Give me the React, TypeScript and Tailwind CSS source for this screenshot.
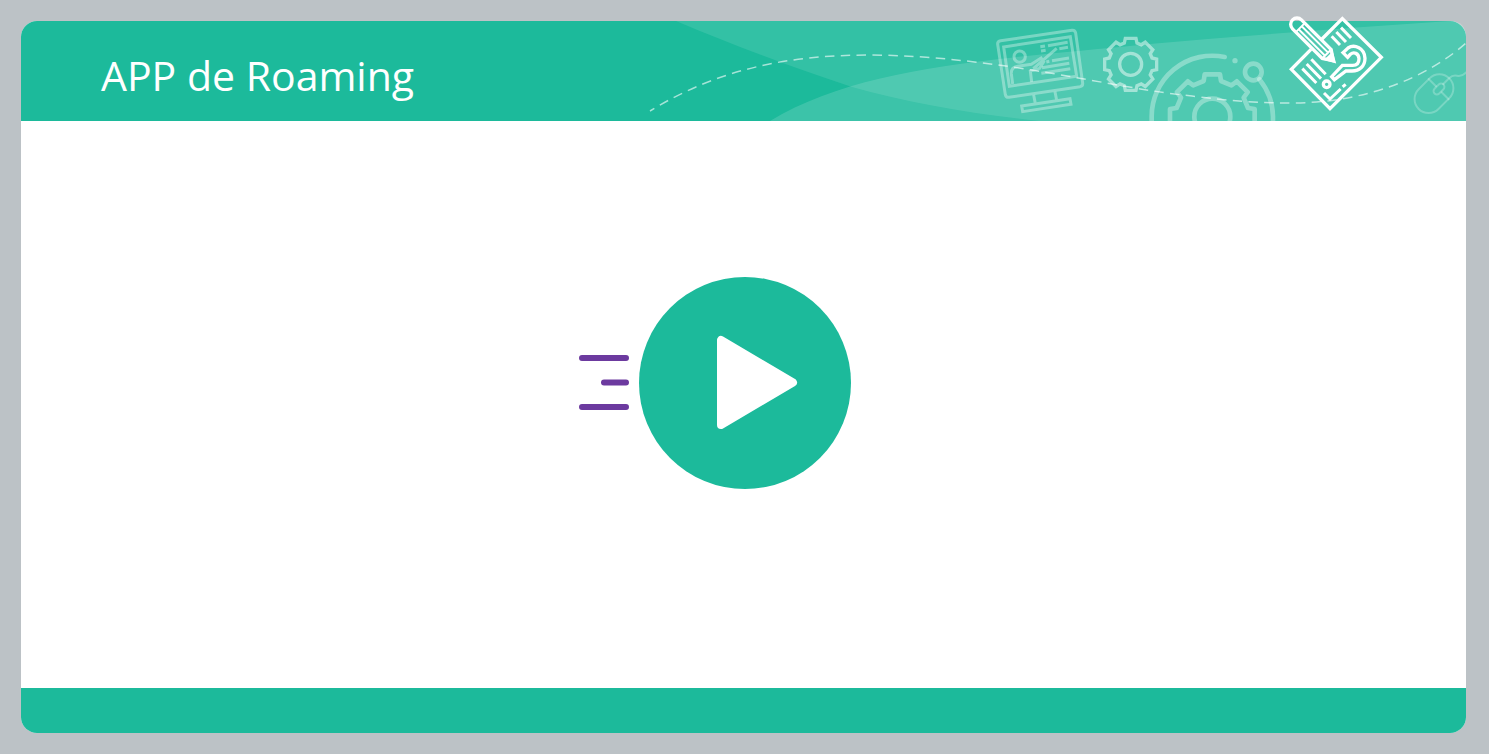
const TEETH = [0, 45, 90, 135, 180, 225, 270, 315];

function gearPath(cx: number, cy: number, outer: number, inner: number, half: number): string {
  const points = TEETH.flatMap((deg) => {
    const a = (deg * Math.PI) / 180;
    const corners = [
      [-half - 2, -inner],
      [-half + 1, -outer],
      [half - 1, -outer],
      [half + 2, -inner],
    ];
    return corners.map(([x, y]) => {
      const px = cx + x * Math.cos(a) - y * Math.sin(a);
      const py = cy + x * Math.sin(a) + y * Math.cos(a);
      return `${px.toFixed(1)} ${py.toFixed(1)}`;
    });
  });
  return `M${points.join("L")}Z`;
}

function Monitor() {
  return (
    <g transform="translate(980 15) scale(.3333)" stroke="#fff" strokeOpacity=".34" strokeWidth="9" fill="none">
      <path d="M62 77L276 46Q285 45 287 54L308 204Q309 213 300 215L87 247Q78 248 76 239L53 88Q52 79 62 77Z" />
      <path d="M71 96L271 65L290 184L88 214Z" />
      <circle cx="119" cy="125" r="17" />
      <path d="M98 207L94 176Q93 157 113 154L154 148L187 127M155 201L151 168L179 160L193 137M160 161L230 100" />
      <path d="M181 95L195 93M204 92L263 82M183 108L197 106M238 101L264 97M199 141L208 139M216 137L267 129M186 158L268 145M184 175L271 161" />
      <path d="M161 240L166 266M225 230L230 256M125 273L270 251L273 268L128 290Z" />
    </g>
  );
}

function Gears() {
  return (
    <>
      <g transform="translate(980 15) scale(.3333)" stroke="#fff" strokeOpacity=".48" strokeWidth="10" fill="none">
        <path d={gearPath(452, 148, 78, 64, 17)} />
        <circle cx="452" cy="148" r="33" />
      </g>
      <g transform="translate(1135 15) scale(.3333)" stroke="#fff" strokeOpacity=".33" strokeWidth="14" fill="none" strokeLinejoin="round" strokeLinecap="round">
        <path d={gearPath(232, 305, 127, 107, 24)} />
        <circle cx="232" cy="305" r="54" />
        <path d="M50 320V305A182 182 0 0 1 269 126M373 193A182 182 0 0 1 414 305V320" />
        <circle cx="355" cy="171" r="25" />
        <circle cx="300" cy="137" r="8" fill="#fff" fillOpacity=".33" stroke="none" />
      </g>
    </>
  );
}

function Mouse() {
  return (
    <g transform="translate(1380 10) scale(.3333)" stroke="#fff" strokeOpacity=".24" strokeWidth="6" fill="none" strokeLinecap="round">
      <rect x="-42" y="-65" width="84" height="130" rx="42" transform="translate(162 251) rotate(45)" />
      <rect x="-10" y="-19" width="20" height="38" rx="10" transform="translate(177 237) rotate(45)" />
      <path d="M146 207L168 229M185 247L206 268M190 222L208 204Q218 194 231 197Q247 201 262 184" />
    </g>
  );
}

function QuizSheet() {
  return (
    <g transform="translate(1275 5) scale(.3333)" stroke="#fff" strokeWidth="10" fill="none">
      <path d="M108 133L49 193L165 311L319 157L202 41L141 102" />
      <g transform="translate(66 58) rotate(45)">
        <path d="M0 -19A19 19 0 0 0 0 19L126 19L154 0L126 -19Z" />
        <path d="M14 -19V19M14 -6H126M14 7H126M126 -19V19" strokeWidth="6" />
        <path d="M138 -10L156 0L138 10Z" fill="#fff" />
      </g>
      <path d="M82 191L124 234M95 177L138 221M109 163L152 208M170 94L195 120M184 81L213 111M198 68L228 99" strokeWidth="9" />
      <path d="M204 143L219 129C239 116 269 130 270 160C270 183 254 198 231 198H213L178 224L170 215L202 181H233C246 181 252 173 252 161C251 145 237 139 226 148L218 157Z" />
      <circle cx="155" cy="238" r="10" />
      <path d="M147 264L165 282L197 252M203 246L212 238" strokeWidth="9" />
    </g>
  );
}

function HeaderArt() {
  return (
    <svg
      className="pointer-events-none absolute right-0 bottom-0 h-[120px] w-[826px]"
      viewBox="640 1 826 120"
      aria-hidden="true"
    >
      <defs>
        <clipPath id="band">
          <path d="M640 21H1450Q1466 21 1466 37V121H640Z" />
        </clipPath>
      </defs>
      <g clipPath="url(#band)">
        <path d="M676 21C735 46 795 68 852 87C910 103 972 114 1040 121H1466V21Z" fill="#fff" fillOpacity=".1" />
        <path d="M770 121C860 66 990 60 1150 44C1250 35 1350 28 1450 21H1466V121Z" fill="#fff" fillOpacity=".14" />
        <Monitor />
        <Gears />
        <Mouse />
        <path
          d="M650 111C720 68 790 55 870 55C1000 56 1110 88 1192 96C1230 101 1260 103 1290 103C1370 103 1430 75 1466 43"
          fill="none"
          stroke="#fff"
          strokeOpacity=".6"
          strokeWidth="1.5"
          strokeDasharray="9.5 6.3"
          strokeDashoffset="4.5"
        />
      </g>
      <QuizSheet />
    </svg>
  );
}

export default function App() {
  return (
    <div className="flex min-h-screen flex-col bg-[#bcc2c6] py-[21px] pr-[23px] pl-[21px]">
      <div className="flex flex-1 flex-col rounded-2xl bg-white">
        <header className="relative flex h-[100px] items-center rounded-t-2xl bg-[#1cba9b] px-20">
          <HeaderArt />
          <h1 className="relative pt-2 font-['Open_Sans',sans-serif] text-[41px] leading-none whitespace-nowrap text-white">
            APP de Roaming
          </h1>
        </header>
        <main className="flex flex-1 items-center justify-center pr-[58px] pb-[43px]">
          <button type="button" aria-label="Play" className="cursor-pointer">
            <svg className="h-[212px] w-[272px]" viewBox="0 0 272 212" aria-hidden="true">
              <path d="M3 81H47M25 105.500H47M3 130H47" stroke="#6c3a9f" strokeWidth="6" strokeLinecap="round" />
              <circle cx="166" cy="106" r="106" fill="#1cba9b" />
              <path d="M142 63V148L214 105.500Z" fill="#fff" stroke="#fff" strokeWidth="8" strokeLinejoin="round" />
            </svg>
          </button>
        </main>
        <footer className="h-[45px] rounded-b-2xl bg-[#1cba9b]" />
      </div>
    </div>
  );
}
